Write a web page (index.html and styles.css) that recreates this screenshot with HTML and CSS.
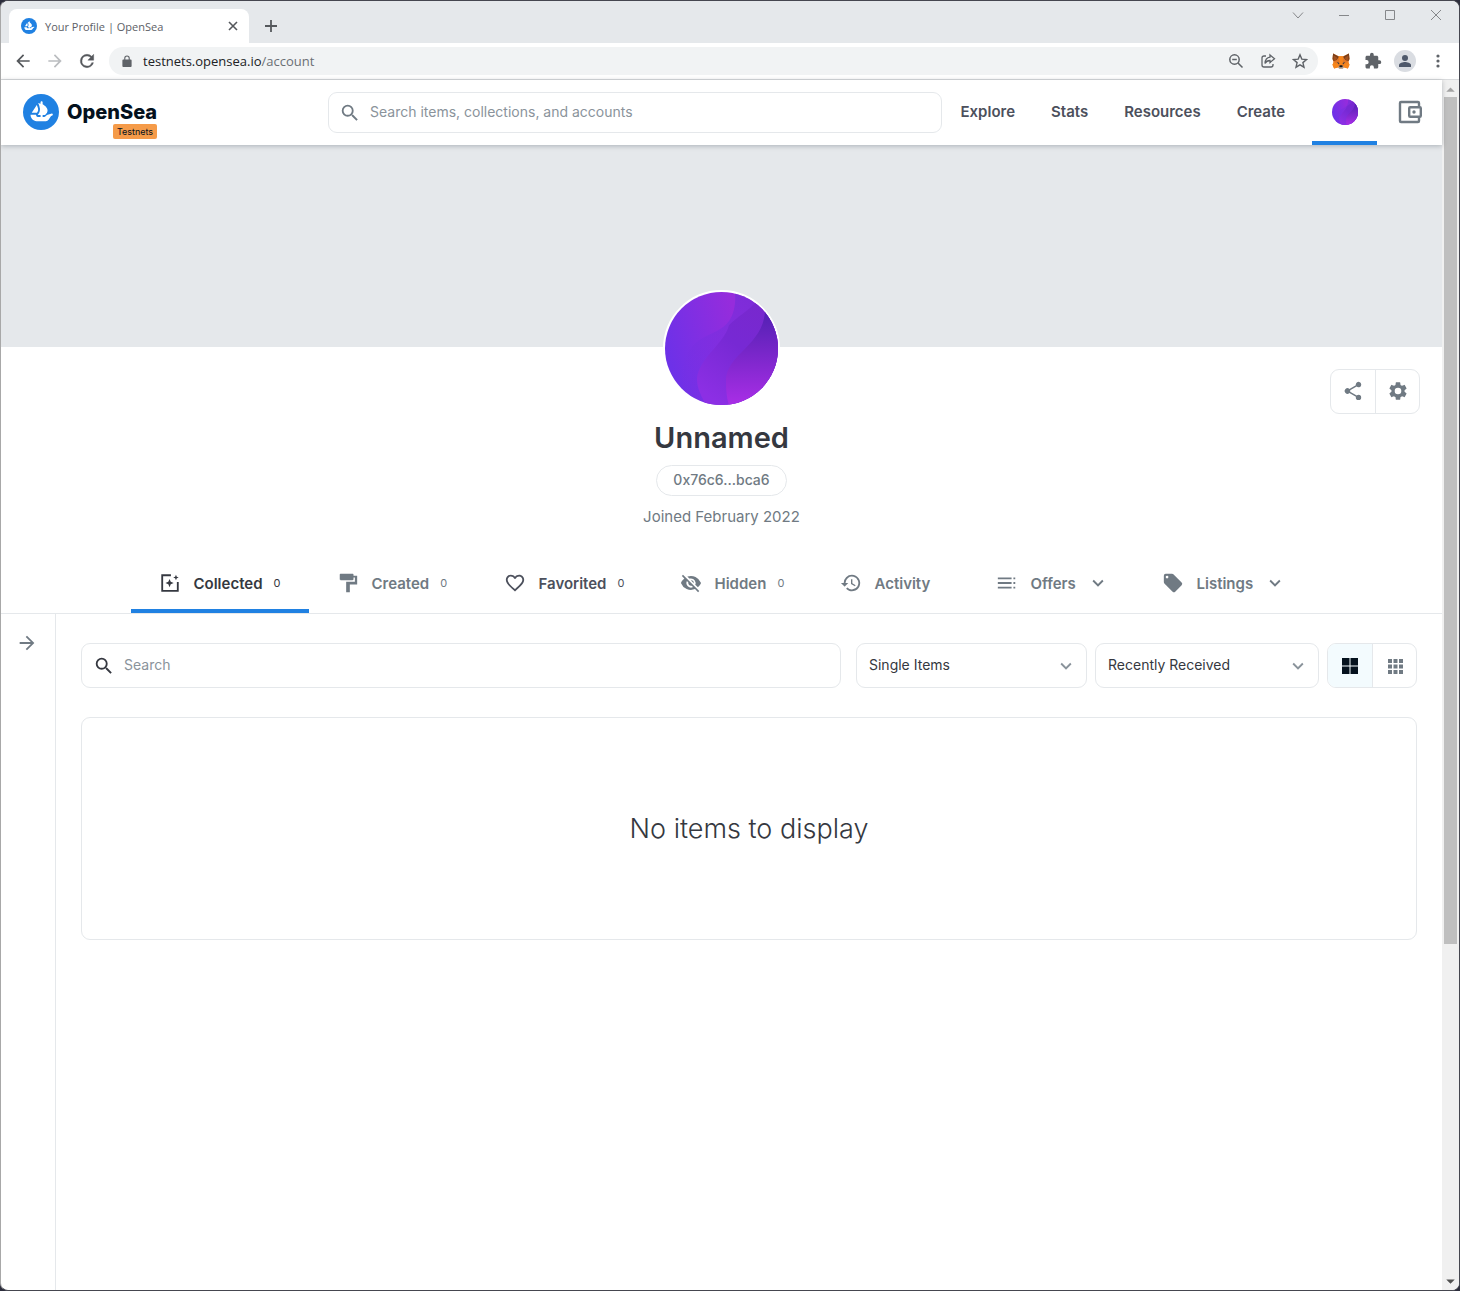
FILE: index.html
```html
<!DOCTYPE html>
<html lang="en">
<head>
<meta charset="utf-8">
<title>Your Profile | OpenSea</title>
<link rel="stylesheet" href="styles.css">
</head>
<body>
<svg class="defs" aria-hidden="true">
  <symbol id="ship" viewBox="0 0 90 90">
    <circle cx="45" cy="45" r="45" fill="#2081e2"/>
    <path fill="#fff" d="M22.2 46.5 34.1 27.9c.2-.3.6-.3.7 0 2 4.400 3.600 9.900 2.900 13.300-.4 1.400-1.300 3.300-2.400 5-.3.6-.5.9-.8.9H22.500c-.3 0-.5-.3-.3-.6z"/>
    <path fill="#fff" d="M74.400 49.900v2.900c0 .2-.1.300-.3.400-.9.400-4 1.800-5.300 3.600-3.300 4.600-5.800 11.100-11.400 11.100H33.900c-8.300 0-15-6.800-15-15.100v-.3c0-.2.200-.4.400-.4h13.100c.3 0 .5.200.4.500-.1.900.1 1.700.5 2.500.8 1.600 2.400 2.600 4.100 2.600h6.500v-5h-6.400c-.3 0-.5-.4-.3-.7 1.400-2 3-4.700 4.100-7.300 1.700-4.300 1.400-9 .4-11-.6-4.200-2.200-8.300-4-11.200l6.200 1.700v-3.600c0-1.500 1.200-2.700 2.600-2.700s2.600 1.200 2.600 2.700v5.100c5.500 3 12.300 9.500 12.300 14.900 0 4.700-2.200 7.800-4.800 10.400-.7.700-1.500 1.200-2.300 1.200h-5.200v5h4.100c.9 0 1.800-.3 2.500-.9 1.300-1.200 3-3.200 4-4.100l12.500-3.600c.2-.1.500.100.5.300z"/>
  </symbol>
  <symbol id="search" viewBox="0 0 24 24"><path fill="currentColor" d="M15.500 14h-.79l-.28-.27A6.470 6.470 0 0 0 16 9.500 6.500 6.500 0 1 0 9.500 16c1.610 0 3.090-.59 4.230-1.570l.27.280v.79l5 4.990L20.490 19l-4.990-5zm-6 0a4.500 4.500 0 1 1 0-9 4.500 4.500 0 0 1 0 9z"/></symbol>
  <symbol id="chevron" viewBox="0 0 24 24"><path fill="currentColor" d="M7.410 8.590 12 13.170l4.590-4.580L18 10l-6 6-6-6z"/></symbol>
  <symbol id="arrow" viewBox="0 0 24 24"><path fill="currentColor" d="m12 4-1.410 1.410L16.170 11H4v2h12.170l-5.580 5.590L12 20l8-8z"/></symbol>
  <linearGradient id="base" x1="0" y1=".5" x2="1" y2=".2"><stop offset="0" stop-color="#6d31e8"/><stop offset=".65" stop-color="#962cdc"/></linearGradient>
  <linearGradient id="haze" x1=".8" y1="0" x2=".2" y2=".8"><stop offset="0" stop-color="#7c2cd6"/><stop offset="1" stop-color="#7530e4" stop-opacity=".2"/></linearGradient>
  <linearGradient id="wave" x1=".8" y1="0" x2=".3" y2="1"><stop offset="0" stop-color="#7828cc"/><stop offset=".5" stop-color="#7729d4"/><stop offset="1" stop-color="#8c2fe4"/></linearGradient>
  <linearGradient id="deep" x1="0" y1="0" x2="0" y2="1"><stop offset=".1" stop-color="#4a1fae"/><stop offset="1" stop-color="#a92ee6"/></linearGradient>
  <symbol id="avatar" viewBox="0 0 113 113">
    <path fill="url(#base)" d="M0 0h113v113H0z"/>
    <path fill="url(#haze)" d="M70 0h43v113H24C12 84 16 60 36 47c10-6 22-9 28-18 5-7 7-18 6-29z"/>
    <path fill="url(#wave)" d="M91 10C82 20 72 25 64 33c-4 18-31 34-32 54 0 10 5 18 9 26h72V0z"/>
    <path fill="url(#deep)" d="M100 18c-1 36-40 44-39 72 0 10 1 17 3 23h49V0z"/>
  </symbol>
</svg>

<div class="window">
  <div class="tabstrip">
    <div class="browser-tab">
      <svg class="favicon"><use href="#ship"/></svg>
      <span class="tab-title">Your Profile | OpenSea</span>
      <button class="plain" aria-label="Close tab"><svg width="10" height="10" viewBox="0 0 10 10" fill="none" stroke="#55585c" stroke-width="1.600"><path d="M1 1l8 8M9 1 1 9"/></svg></button>
    </div>
    <button class="plain new-tab" aria-label="New tab"><svg width="14" height="14" viewBox="0 0 14 14" fill="none" stroke="#55585c" stroke-width="1.800"><path d="M7 1v12M1 7h12"/></svg></button>
    <div class="controls">
      <svg viewBox="0 0 12 12"><path d="M1 3.500 6 9l5-5.500"/></svg>
      <svg viewBox="0 0 12 12"><path d="M1 6.500h10"/></svg>
      <svg viewBox="0 0 12 12"><path d="M1.500 1.500h9v9h-9z"/></svg>
      <svg viewBox="0 0 12 12"><path d="m1 1 10 10M11 1 1 11"/></svg>
    </div>
  </div>

  <div class="toolbar">
    <button class="plain" aria-label="Back"><svg class="i20 flip"><use href="#arrow"/></svg></button>
    <button class="plain faint" aria-label="Forward"><svg class="i20"><use href="#arrow"/></svg></button>
    <button class="plain" aria-label="Reload"><svg class="i20" viewBox="0 0 24 24" fill="currentColor"><path d="M17.650 6.350A7.960 7.960 0 0 0 12 4a8 8 0 1 0 7.730 10h-2.080A6 6 0 1 1 12 6c1.660 0 3.140.69 4.220 1.780L13 11h7V4z" stroke="currentColor" stroke-width=".5"/></svg></button>
    <div class="address">
      <svg class="lock" viewBox="0 0 10 13"><path fill="#5f6368" d="M1 5h1V3.500a3 3 0 0 1 6 0V5h1q1 0 1 1v6q0 1-1 1H1q-1 0-1-1V6q0-1 1-1zm2.200 0h3.600V3.500a1.800 1.800 0 0 0-3.600 0z"/></svg>
      <span class="url">testnets.opensea.io<span>/account</span></span>
      <svg class="i16" viewBox="0 0 16 16" fill="none" stroke="#5f6368" stroke-width="1.500"><circle cx="6.500" cy="6.500" r="4.700"/><path d="m10 10 4.500 4.500M4.200 6.500h4.600"/></svg>
      <svg class="i16" viewBox="0 0 16 16" fill="none" stroke="#5f6368" stroke-width="1.300"><path d="M6 3H4Q2 3 2 5v7q0 2 2 2h7q2 0 2-2v-1M10 2l4.500 3.800L10 9.500V7.500C7.500 7.500 6 8.500 5 10.500 5.200 6.500 7 4.500 10 4.200z"/></svg>
      <svg class="i16" viewBox="0 0 16 16" fill="none" stroke="#5f6368" stroke-width="1.400"><path d="m8 1.800 1.800 4.300 4.700.4-3.600 3.100 1.100 4.600L8 11.800l-4 2.400 1.100-4.600-3.600-3.100 4.700-.4z"/></svg>
    </div>
    <svg class="i18 fox" viewBox="0 0 34 32">
      <path fill="#e17726" d="M32 2 21 7h-8L2 2 1 12l2 7-2 4 3 7 7-2 3 2h6l3-2 7 2 3-7-2-4 2-7z"/>
      <path fill="#f6851b" d="m3 18 8 3 2 7-9 2-3-7zm28 0-8 3-2 7 9 2 3-7zM13 7h8l-1 18h-6z"/>
      <path fill="#763e1a" d="m32 2-11 6 4 6 6 2 2-4zM2 2l11 6-4 6-6 2-2-4z"/>
      <path fill="#a3501c" d="m31 5-7 5 2 4 5 1zM3 5l7 5-2 4-5 1z"/>
      <path fill="#233447" d="m9 18 5 2-1 2zm16 0-5 2 1 2z"/>
      <path fill="#c0ac9d" d="m12 27 2-2h6l2 2v2l-2 2h-6l-2-2z"/>
      <path fill="#161616" d="m14 25 1-1h4l1 1v3h-6z"/>
    </svg>
    <svg class="i18" viewBox="0 0 24 24" fill="#5f6368"><path d="M20.500 11H19V7c0-1.100-.9-2-2-2h-4V3.500a2.500 2.500 0 0 0-5 0V5H4c-1.100 0-2 .9-2 2v3.800h1.500a2.700 2.700 0 0 1 0 5.400H2V20c0 1.100.9 2 2 2h3.800v-1.500a2.700 2.700 0 0 1 5.400 0V22H17c1.100 0 2-.9 2-2v-4h1.500a2.500 2.500 0 0 0 0-5z"/></svg>
    <svg class="i22" viewBox="0 0 22 22"><circle cx="11" cy="11" r="11" fill="#dadde2"/><path fill="#4f596b" d="M5 17v-2c0-2 4-3 6-3s6 1 6 3v2z"/><circle cx="11" cy="8" r="3" fill="#4f596b"/></svg>
    <svg class="dots" viewBox="0 0 4 14" fill="#5f6368"><circle cx="2" cy="2" r="1.600"/><circle cx="2" cy="7" r="1.600"/><circle cx="2" cy="12" r="1.600"/></svg>
  </div>

  <div class="viewport">
    <div class="page">
      <header class="site-header">
        <a class="brand" href="#">
          <svg class="brand-mark"><use href="#ship"/></svg>
          <span class="brand-name">OpenSea<span class="badge">Testnets</span></span>
        </a>
        <label class="field top-search">
          <svg class="i22 grey"><use href="#search"/></svg>
          <input type="search" placeholder="Search items, collections, and accounts" aria-label="Search items, collections, and accounts">
        </label>
        <nav class="site-nav">
          <a href="#">Explore</a>
          <a href="#">Stats</a>
          <a href="#">Resources</a>
          <a href="#">Create</a>
        </nav>
        <a class="account" href="#" aria-label="Account"><svg><use href="#avatar"/></svg></a>
        <button class="plain wallet" aria-label="Wallet"><svg width="24" height="24" viewBox="0 0 24 24" fill="none" stroke="#707a83" stroke-width="2.400"><path d="M21 7V3q0-1-1-1H3Q2 2 2 3v18q0 1 1 1h17q1 0 1-1v-4"/><rect x="11.200" y="7.200" width="11.600" height="9.600" rx="1"/><circle cx="16" cy="12" r="1.700" fill="#707a83" stroke="none"/></svg></button>
      </header>

      <div class="banner"></div>

      <section class="profile">
        <div></div>
        <div class="identity">
          <svg class="portrait"><use href="#avatar"/></svg>
          <h1>Unnamed</h1>
          <button class="address-pill">0x76c6...bca6</button>
          <p>Joined February 2022</p>
        </div>
        <div class="split actions">
          <button aria-label="Share"><svg class="i22" viewBox="0 0 24 24" fill="currentColor"><path d="M18 16.080c-.76 0-1.440.3-1.960.77L8.910 12.700c.05-.23.090-.46.090-.7s-.04-.47-.09-.7l7.050-4.110A3 3 0 1 0 15 5c0 .24.040.47.090.7L8.040 9.810a3 3 0 1 0 0 4.380l7.120 4.160c-.05.21-.08.430-.08.650a2.920 2.920 0 1 0 2.920-2.920z"/></svg></button>
          <button aria-label="Settings"><svg class="i22" viewBox="0 0 24 24" fill="currentColor"><path d="M19.140 12.940c.04-.3.060-.61.060-.94s-.02-.64-.07-.94l2.030-1.580a.49.490 0 0 0 .12-.61l-1.920-3.320a.49.490 0 0 0-.59-.22l-2.390.96a7 7 0 0 0-1.620-.94l-.36-2.540a.48.480 0 0 0-.48-.41h-3.840a.47.470 0 0 0-.47.410l-.36 2.540c-.59.240-1.130.57-1.620.94l-2.390-.96a.48.480 0 0 0-.59.220L2.740 8.870a.47.470 0 0 0 .12.610l2.030 1.580a6 6 0 0 0-.02 1.880l-2.030 1.580a.49.490 0 0 0-.12.610l1.920 3.320c.12.220.37.290.59.220l2.390-.96c.5.380 1.030.7 1.620.94l.36 2.540c.05.240.24.410.48.410h3.840c.24 0 .44-.17.470-.41l.36-2.540a7 7 0 0 0 1.620-.94l2.390.96c.22.080.47 0 .59-.22l1.920-3.320a.47.470 0 0 0-.12-.61zM12 15.600a3.600 3.600 0 1 1 0-7.200 3.600 3.600 0 0 1 0 7.200z"/></svg></button>
        </div>
      </section>

      <nav class="tabs">
        <a class="active" href="#"><svg class="i22" viewBox="0 0 24 24" fill="none" stroke="currentColor" stroke-width="2"><path d="M13 3.500H3.500V20.500h17V11"/><path fill="currentColor" stroke="none" d="m11.500 7.500 1.300 3.200 3.200 1.300-3.200 1.300-1.300 3.200-1.300-3.200L7 12l3.200-1.300zM18.500 3l.9 2.100 2.100.9-2.100.9-.9 2.100-.9-2.100-2.100-.9 2.100-.9z"/></svg><span>Collected</span><small>0</small></a>
        <a href="#"><svg class="i22" viewBox="0 0 24 24" fill="currentColor"><path d="M18 4V3c0-.55-.45-1-1-1H4c-.55 0-1 .45-1 1v5c0 .55.450 1 1 1h13c.55 0 1-.45 1-1V6h1.500v4.500H10V22h4v-8.500h8V4z"/></svg><span>Created</span><small>0</small></a>
        <a class="strong" href="#"><svg class="i22" viewBox="0 0 24 24" fill="currentColor"><path d="M16.500 3c-1.740 0-3.410.81-4.500 2.090C10.910 3.810 9.240 3 7.500 3 4.420 3 2 5.420 2 8.500c0 3.780 3.400 6.860 8.550 11.540L12 21.350l1.450-1.320C18.600 15.360 22 12.280 22 8.500 22 5.420 19.580 3 16.500 3zm-4.400 15.550-.1.100-.1-.1C7.140 14.240 4 11.390 4 8.500 4 6.500 5.500 5 7.500 5c1.540 0 3.040.99 3.570 2.360h1.870C13.460 5.990 14.960 5 16.500 5c2 0 3.500 1.500 3.500 3.500 0 2.890-3.140 5.740-7.900 10.050z"/></svg><span>Favorited</span><small>0</small></a>
        <a href="#"><svg class="i22" viewBox="0 0 24 24" fill="currentColor"><path d="M12 7a5 5 0 0 1 4.640 6.830l2.920 2.920A11.800 11.800 0 0 0 22.990 12 11.800 11.800 0 0 0 8.010 4.970l2.160 2.160C10.740 7.130 11.350 7 12 7zM2 4.270l2.740 2.740A11.800 11.800 0 0 0 1 12a11.800 11.800 0 0 0 15.380 6.660L19.730 22 21 20.730 3.270 3zM7.530 9.800l1.550 1.550A3 3 0 0 0 12.650 14.920l1.550 1.550A5 5 0 0 1 7.530 9.800zm4.310-.78 3.150 3.150.02-.16a3 3 0 0 0-3.170-2.990z"/></svg><span>Hidden</span><small>0</small></a>
        <a href="#"><svg class="i22" viewBox="0 0 24 24" fill="currentColor"><path d="M13 3a9 9 0 0 0-9 9H1l3.890 3.890.07.140L9 12H6a7 7 0 1 1 2.060 4.940l-1.420 1.420A9 9 0 1 0 13 3zm-1 5v5l4.280 2.540.72-1.210-3.500-2.080V8z"/></svg><span>Activity</span></a>
        <a href="#"><svg class="i22" viewBox="0 0 24 24" fill="currentColor"><path d="M2 6h15v2H2zm0 5h15v2H2zm0 5h15v2H2zM19 6h2v2h-2zm0 5h2v2h-2zm0 5h2v2h-2z"/></svg><span>Offers</span><svg class="i22"><use href="#chevron"/></svg></a>
        <a href="#"><svg class="i22" viewBox="0 0 24 24" fill="currentColor"><path d="m21.410 11.580-9-9A2 2 0 0 0 11 2H4a2 2 0 0 0-2 2v7c0 .55.220 1.050.59 1.420l9 9a2 2 0 0 0 2.820 0l7-7a2 2 0 0 0 0-2.840zM5.500 7a1.500 1.500 0 1 1 0-3 1.500 1.500 0 0 1 0 3z"/></svg><span>Listings</span><svg class="i22"><use href="#chevron"/></svg></a>
      </nav>

      <div class="body">
        <aside><button class="plain grey" aria-label="Open filters"><svg class="i22"><use href="#arrow"/></svg></button></aside>
        <main>
          <div class="filters">
            <label class="field item-search">
              <svg class="i22"><use href="#search"/></svg>
              <input type="search" placeholder="Search" aria-label="Search">
            </label>
            <div class="pick kind"><select aria-label="Item type"><option>Single Items</option></select><svg class="i22"><use href="#chevron"/></svg></div>
            <div class="pick order"><select aria-label="Sort by"><option>Recently Received</option></select><svg class="i22"><use href="#chevron"/></svg></div>
            <div class="split">
              <button class="on" aria-label="Large grid"><svg class="i18" viewBox="0 0 18 18" fill="#04111d"><path d="M1 1h7.500v7.500H1zM9.500 1H17v7.500H9.500zM1 9.500h7.500V17H1zM9.500 9.500H17V17H9.500z"/></svg></button>
              <button aria-label="Small grid"><svg class="i18" viewBox="0 0 18 18" fill="currentColor"><path d="M2 2h4v4H2zm5.500 0h4v4h-4zM13 2h4v4h-4zM2 7.500h4v4H2zm5.500 0h4v4h-4zm5.500 0h4v4h-4zM2 13h4v4H2zm5.500 0h4v4h-4zm5.500 0h4v4h-4z"/></svg></button>
            </div>
          </div>
          <div class="empty">No items to display</div>
        </main>
      </div>
    </div>

    <div class="scrollbar">
      <svg viewBox="0 0 16 16" fill="#a3a3a3"><path d="m8 7 4 4H4z"/></svg>
      <div class="track"><div class="thumb"></div></div>
      <svg viewBox="0 0 16 16" fill="#505050"><path d="m8 10 4-4H4z"/></svg>
    </div>
  </div>
</div>
</body>
</html>
```

FILE: styles.css
```css
* { box-sizing: border-box; }

body {
  margin: 0;
  background: #2c2d3c;
  color: #353840;
  font-family: Inter, "Open Sans", sans-serif;
  font-size: 14px;
}

a { color: inherit; text-decoration: none; }
button, input, select { font: inherit; color: inherit; }
svg { display: block; flex: none; }
.defs { position: absolute; width: 0; height: 0; }
.i16 { width: 16px; height: 16px; }
.i18 { width: 18px; height: 18px; }
.i20 { width: 20px; height: 20px; }
.i22 { width: 22px; height: 22px; }
.grey { color: #707a83; }
.plain { display: flex; padding: 0; border: 0; background: none; }

/* Browser chrome */
.window {
  display: flex;
  flex-direction: column;
  min-height: 100vh;
  overflow: hidden;
  border: 1px solid #45464f;
  border-left-color: #a8a8a8;
  border-radius: 8px;
  background: #fff;
}

.tabstrip {
  display: flex;
  height: 42px;
  padding-left: 8px;
  background: #e5e8eb;
}

.browser-tab {
  display: flex;
  align-items: center;
  gap: 8px;
  width: 240px;
  margin-top: 8px;
  padding: 0 11px 0 12px;
  border-radius: 8px 8px 0 0;
  background: #fff;
}

.favicon { width: 16px; height: 16px; }

.tab-title {
  flex: 1;
  color: #5c6066;
  font: 11px "Open Sans", sans-serif;
}

.new-tab { align-self: center; margin: 8px 0 0 15px; }

.controls {
  display: flex;
  gap: 34px;
  margin: 8px 17px 0 auto;
}

.controls svg {
  width: 12px;
  height: 12px;
  fill: none;
  stroke: #85878a;
}

.toolbar {
  display: flex;
  align-items: center;
  gap: 12px;
  height: 37px;
  padding: 0 19px 0 12px;
  border-bottom: 1px solid #d9dbdd;
  color: #55585c;
}

.flip { transform: scaleX(-1); }
.faint { color: #bbbdc0; }

.address {
  display: flex;
  align-items: center;
  flex: 1;
  gap: 16px;
  height: 28px;
  padding: 0 10px 0 13px;
  border-radius: 14px;
  background: #f1f3f4;
}

.lock { width: 10px; height: 12px; }

.url {
  flex: 1;
  margin-left: -5px;
  color: #202124;
  font: 13px "Open Sans", sans-serif;
}

.url span { color: #6b6f74; }
.fox { margin: 0 2px; }
.dots { width: 4px; height: 14px; margin-left: 8px; }

.viewport { display: flex; flex: 1; }
.page { display: flex; flex: 1; flex-direction: column; min-width: 0; }

/* Scrollbar */
.scrollbar {
  display: flex;
  flex-direction: column;
  width: 17px;
  background: #f0f0f0;
}

.scrollbar svg { width: 17px; height: 17px; }
.track { flex: 1; padding: 0 2px; }
.thumb { height: 72%; background: #bfbfbf; }

/* Site header */
.site-header {
  position: relative;
  display: flex;
  align-items: center;
  height: 65px;
  padding: 0 20px 0 22px;
  box-shadow: 0 1px 5px rgba(4, 17, 29, 0.25);
}

.brand { display: flex; align-items: center; gap: 8px; width: 305px; padding-bottom: 2px; }
.brand-mark { width: 36px; height: 36px; }

.brand-name {
  position: relative;
  color: #04111d;
  font-size: 20px;
  font-weight: 800;
}

.badge {
  position: absolute;
  top: 24px;
  right: 0;
  padding: 0 4px;
  border-radius: 2px;
  background: #f59b49;
  font-size: 9px;
  font-weight: 400;
  line-height: 15px;
}

.field {
  display: flex;
  align-items: center;
  gap: 9px;
  border: 1px solid #e5e8eb;
  border-radius: 9px;
}

.field input {
  flex: 1;
  min-width: 0;
  padding: 0 0 3px;
  border: 0;
  outline: 0;
  background: none;
}

.field input::placeholder { color: #8a939b; opacity: 1; }
.top-search { flex: 1; height: 41px; padding: 0 10px; }

.site-nav {
  display: flex;
  gap: 36px;
  padding: 0 27px 2px 18px;
  color: #4c505c;
  font-size: 15px;
  font-weight: 600;
}

.account {
  display: flex;
  align-items: center;
  justify-content: center;
  align-self: stretch;
  width: 65px;
  padding-top: 2px;
  border-bottom: 4px solid #2081e2;
  border-radius: 3px 3px 0 0;
}

.account svg { width: 26px; height: 26px; border-radius: 50%; }
.wallet { margin-left: 21px; padding-bottom: 2px; }

/* Profile */
.banner { height: 202px; background: #e5e8eb; }

.profile {
  display: grid;
  grid-template-columns: 1fr auto 1fr;
  align-items: start;
  padding: 0 22px;
}

.identity { display: flex; flex-direction: column; align-items: center; }

.portrait {
  width: 117px;
  height: 117px;
  margin-top: -57px;
  border: 2px solid #fff;
  border-radius: 50%;
  background: #fff;
}

h1 { margin: 13px 0 9px; font-size: 29px; font-weight: 600; line-height: 36px; }

.address-pill {
  height: 31px;
  padding: 0 16px 2px;
  border: 1px solid #e5e8eb;
  border-radius: 16px;
  background: #fff;
  color: #707a83;
  font-weight: 500;
}

.identity p { margin: 11px 0 0; color: #707a83; font-size: 15px; line-height: 20px; }

.split {
  display: flex;
  overflow: hidden;
  border: 1px solid #e5e8eb;
  border-radius: 9px;
}

.split button {
  display: flex;
  align-items: center;
  justify-content: center;
  width: 44px;
  height: 43px;
  padding: 0;
  border: 0;
  background: none;
  color: #707a83;
}

.split button + button { border-left: 1px solid #e5e8eb; }
.split .on { background: #f3fbfe; }
.actions { justify-self: end; margin-top: 22px; }
.actions button { padding-bottom: 2px; }

.tabs {
  display: grid;
  grid-template-columns: 178px 167px 176px 160px 156px 166px 179px;
  justify-content: center;
  margin-top: 26px;
  border-bottom: 1px solid #e5e8eb;
  color: #707a83;
  font-size: 15px;
  font-weight: 600;
}

.tabs a {
  display: flex;
  align-items: center;
  height: 60px;
  padding-left: 28px;
  border-radius: 3px 3px 0 0;
}

.tabs span { margin: 0 11px 0 13px; }
.tabs small { font-size: 11px; font-weight: 400; }
.tabs .active { padding-top: 4px; border-bottom: 4px solid #2081e2; color: #353840; }
.tabs .strong { color: #4c505c; }

/* Collection */
.body { display: flex; flex: 1; }
aside { width: 55px; padding: 18px 15px; border-right: 1px solid #e5e8eb; }
main { flex: 1; padding: 29px 25px; }
.filters { display: flex; gap: 8px; margin-bottom: 29px; }
.item-search { flex: 1; height: 45px; margin-right: 7px; padding: 0 11px; }

.pick { display: grid; align-items: center; }
.pick > * { grid-area: 1 / 1; }
.pick svg { justify-self: end; margin-right: 10px; color: #8a939b; pointer-events: none; }
.kind { width: 231px; }
.order { width: 224px; }

select {
  width: 100%;
  height: 45px;
  padding: 0 12px 2px;
  border: 1px solid #e5e8eb;
  border-radius: 9px;
  background: #fff;
  appearance: none;
}

.empty {
  display: flex;
  align-items: center;
  justify-content: center;
  height: 223px;
  border: 1px solid #e5e8eb;
  border-radius: 9px;
  font-size: 27px;
  font-weight: 300;
}
```
